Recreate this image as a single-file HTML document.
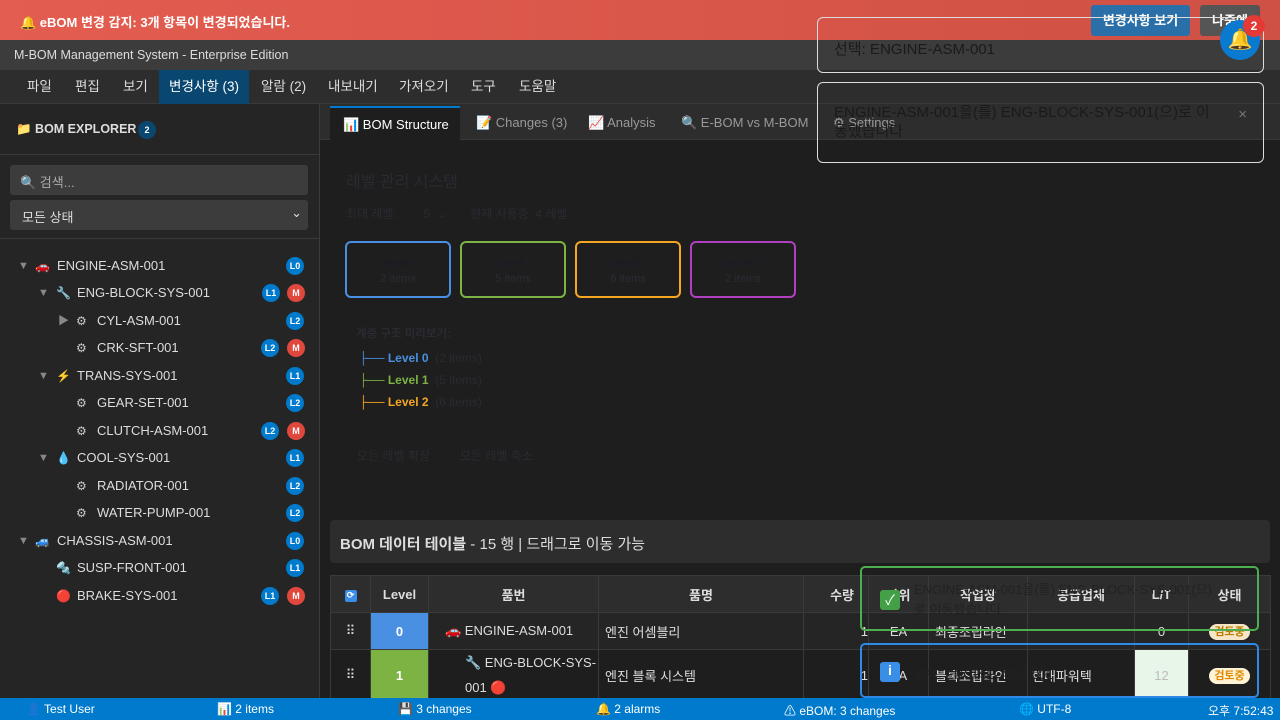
<!DOCTYPE html>
<html><head><meta charset="utf-8"><style>
*{box-sizing:border-box;margin:0;padding:0}
body{width:1280px;height:720px;overflow:hidden;background:#1e1e1e;font-family:"Liberation Sans","Noto Sans CJK KR",sans-serif;color:#ccc;position:relative;font-size:13px}
.abs{position:absolute}
.banner{left:0;top:0;width:1280px;height:40px;background:linear-gradient(90deg,#e35d50,#cf5044);color:#fff;font-weight:bold;font-size:13px;padding:12px 0 0 20px}
.btn{top:5px;height:31px;border-radius:3px;color:#fff;font-weight:bold;font-size:13px;text-align:center;line-height:31px}
.title{left:0;top:40px;width:1280px;height:30px;background:#3c3c3c;color:#ddd;font-size:12.5px;padding:8px 0 0 14px}
.menu{left:0;top:70px;width:1280px;height:34px;background:#2d2d2d;border-bottom:1px solid #3a3a3a}
.menu span{position:absolute;top:0;height:34px;line-height:34px;font-size:13.5px;color:#ddd}
.side{left:0;top:104px;width:320px;height:594px;background:#252526;border-right:1px solid #3a3a3a}
.badge{display:inline-block;width:18px;height:18px;border-radius:9px;background:#007acc;color:#fff;font-size:9px;font-weight:bold;text-align:center;line-height:18px;position:absolute}
.t{position:absolute;font-size:13px;color:#ddd;white-space:nowrap;line-height:16px}
.ar{position:absolute;font-size:11px;color:#888;line-height:16px}
.ic{position:absolute;font-size:12px;line-height:16px}
.tabs{left:320px;top:104px;width:960px;height:36px;background:#2d2d2d;border-bottom:1px solid #3a3a3a}
.tab{position:absolute;top:2px;height:34px;line-height:34px;font-size:13px;color:#999}
.dk{color:#2a2a32}
.lvl{position:absolute;top:241px;width:106px;height:57px;border:2px solid;border-radius:6px;text-align:center}
.lvl b{display:block;margin-top:12px;font-size:13px;color:#1c1c24}
.lvl i{font-style:normal;font-size:11px;color:#2c2c34}
table{border-collapse:collapse;position:absolute;left:330px;top:575px;width:940px;table-layout:fixed}
td,th{border:1px solid #3a3a3a;font-size:13px;color:#ddd;height:37px}
th{background:#2d2d2d;font-weight:bold}
.status{left:0;top:698px;width:1280px;height:22px;background:#007acc;color:#fff;font-size:12px}
.status span{position:absolute;top:4px;white-space:nowrap}
.toast{border:1.5px solid #ddd;border-radius:6px}
</style></head><body>
<div class="abs banner">🔔 eBOM 변경 감지: 3개 항목이 변경되었습니다.</div>
<div class="abs btn" style="left:1091px;width:99px;background:#2a6fa8">변경사항 보기</div>
<div class="abs btn" style="left:1200px;width:60px;background:#555">나중에</div>
<div class="abs title">M-BOM Management System - Enterprise Edition</div>
<div class="abs menu">
<span style="left:27px">파일</span><span style="left:75px">편집</span><span style="left:123px">보기</span>
<span style="left:159px;width:90px;background:#094771;text-align:center;color:#fff">변경사항 (3)</span>
<span style="left:261px">알람 (2)</span><span style="left:328px">내보내기</span><span style="left:399px">가져오기</span><span style="left:471px">도구</span><span style="left:519px">도움말</span>
</div>
<div class="abs side">
<div class="abs" style="left:16px;top:18px;font-weight:bold;font-size:12.5px;color:#ddd;white-space:nowrap">📁 BOM EXPLORER</div>
<div class="badge" style="left:138px;top:17px;background:#094771">2</div>
<div class="abs" style="left:0;top:50px;width:319px;border-top:1px solid #3a3a3a"></div>
<div class="abs" style="left:10px;top:61px;width:298px;height:30px;background:#3c3c3c;border-radius:3px;padding:7px 0 0 10px;color:#aaa">🔍 검색...</div>
<div class="abs" style="left:10px;top:96px;width:298px;height:30px;background:#3c3c3c;border-radius:3px;padding:7px 0 0 12px;color:#ddd">모든 상태<span style="position:absolute;right:6px;top:5px">⌄</span></div>
<div class="abs" style="left:0;top:134px;width:319px;border-top:1px solid #3a3a3a"></div>
</div>
<!-- tree -->
<span class="ar" style="left:18px;top:258px">▼</span><span class="ic" style="left:35px;top:258px">🚗</span><span class="t" style="left:57px;top:258px">ENGINE-ASM-001</span><div class="badge" style="left:286px;top:257px">L0</div>
<span class="ar" style="left:38px;top:285px">▼</span><span class="ic" style="left:56px;top:285px">🔧</span><span class="t" style="left:77px;top:285px">ENG-BLOCK-SYS-001</span><div class="badge" style="left:262px;top:284px">L1</div><div class="badge" style="left:287px;top:284px;background:#e0483e">M</div>
<span class="ar" style="left:58px;top:313px">▶</span><span class="ic" style="left:76px;top:313px">⚙</span><span class="t" style="left:97px;top:313px">CYL-ASM-001</span><div class="badge" style="left:286px;top:312px">L2</div>
<span class="ic" style="left:76px;top:340px">⚙</span><span class="t" style="left:97px;top:340px">CRK-SFT-001</span><div class="badge" style="left:261px;top:339px">L2</div><div class="badge" style="left:287px;top:339px;background:#e0483e">M</div>
<span class="ar" style="left:38px;top:368px">▼</span><span class="ic" style="left:56px;top:368px">⚡</span><span class="t" style="left:77px;top:368px">TRANS-SYS-001</span><div class="badge" style="left:286px;top:367px">L1</div>
<span class="ic" style="left:76px;top:395px">⚙</span><span class="t" style="left:97px;top:395px">GEAR-SET-001</span><div class="badge" style="left:286px;top:394px">L2</div>
<span class="ic" style="left:76px;top:423px">⚙</span><span class="t" style="left:97px;top:423px">CLUTCH-ASM-001</span><div class="badge" style="left:261px;top:422px">L2</div><div class="badge" style="left:287px;top:422px;background:#e0483e">M</div>
<span class="ar" style="left:38px;top:450px">▼</span><span class="ic" style="left:56px;top:450px">💧</span><span class="t" style="left:77px;top:450px">COOL-SYS-001</span><div class="badge" style="left:286px;top:449px">L1</div>
<span class="ic" style="left:76px;top:478px">⚙</span><span class="t" style="left:97px;top:478px">RADIATOR-001</span><div class="badge" style="left:286px;top:477px">L2</div>
<span class="ic" style="left:76px;top:505px">⚙</span><span class="t" style="left:97px;top:505px">WATER-PUMP-001</span><div class="badge" style="left:286px;top:504px">L2</div>
<span class="ar" style="left:18px;top:533px">▼</span><span class="ic" style="left:35px;top:533px">🚙</span><span class="t" style="left:57px;top:533px">CHASSIS-ASM-001</span><div class="badge" style="left:286px;top:532px">L0</div>
<span class="ic" style="left:56px;top:560px">🔩</span><span class="t" style="left:77px;top:560px">SUSP-FRONT-001</span><div class="badge" style="left:286px;top:559px">L1</div>
<span class="ic" style="left:56px;top:588px">🔴</span><span class="t" style="left:77px;top:588px">BRAKE-SYS-001</span><div class="badge" style="left:261px;top:587px">L1</div><div class="badge" style="left:287px;top:587px;background:#e0483e">M</div>
<!-- tabs -->
<div class="abs tabs">
<div class="tab" style="left:10px;width:130px;background:#1e1e1e;border-top:2px solid #007acc;color:#fff;padding-left:13px">📊 BOM Structure</div>
<div class="tab" style="left:156px">📝 Changes (3)</div>
<div class="tab" style="left:268px">📈 Analysis</div>
<div class="tab" style="left:361px">🔍 E-BOM vs M-BOM</div>
<div class="tab" style="left:513px">⚙ Settings</div>
</div>
<div class="abs dk" style="left:346px;top:168px;font-size:16px">레벨 관리 시스템</div>
<div class="abs dk" style="left:346px;top:205px;font-size:12px;white-space:nowrap">최대 레벨: &nbsp;&nbsp;&nbsp;&nbsp;&nbsp;&nbsp;&nbsp;5 &nbsp;⌄ &nbsp;&nbsp;&nbsp;&nbsp;&nbsp;&nbsp;현재 사용중: 4 레벨</div>
<div class="lvl" style="left:345px;border-color:#4a90e2"><b>Level 0</b><i>2 items</i></div>
<div class="lvl" style="left:460px;border-color:#7cb342"><b>Level 1</b><i>5 items</i></div>
<div class="lvl" style="left:575px;border-color:#f5a623"><b>Level 2</b><i>6 items</i></div>
<div class="lvl" style="left:690px;border-color:#b040c0"><b>Level 3</b><i>2 items</i></div>
<div class="abs dk" style="left:356px;top:325px;font-size:11.5px;font-weight:bold">계층 구조 미리보기:</div>
<div class="abs" style="left:359px;top:351px;font-size:12px;font-weight:bold;color:#4a90e2">├── Level 0 <span class="dk" style="font-weight:normal">&nbsp;(2 items)</span></div>
<div class="abs" style="left:359px;top:373px;font-size:12px;font-weight:bold;color:#7cb342">├── Level 1 <span class="dk" style="font-weight:normal">&nbsp;(5 items)</span></div>
<div class="abs" style="left:359px;top:395px;font-size:12px;font-weight:bold;color:#f5a623">├── Level 2 <span class="dk" style="font-weight:normal">&nbsp;(6 items)</span></div>
<div class="abs dk" style="left:357px;top:447px;font-size:12px;white-space:nowrap">모든 레벨 확장 &nbsp;&nbsp;&nbsp;&nbsp;&nbsp;&nbsp;&nbsp;&nbsp;모든 레벨 축소</div>
<div class="abs" style="left:330px;top:520px;width:940px;height:43px;background:#2d2d2d;border-radius:4px;padding:13px 0 0 10px;font-size:15px;color:#ddd"><b>BOM 데이터 테이블</b> - 15 행 | 드래그로 이동 가능</div>
<table>
<colgroup><col style="width:40px"><col style="width:58px"><col style="width:170px"><col style="width:205px"><col style="width:65px"><col style="width:60px"><col style="width:99px"><col style="width:107px"><col style="width:54px"><col style="width:82px"></colgroup>
<tr><th><span style="display:inline-block;width:12px;height:12px;background:#3a8ee6;border-radius:2px;font-size:9px;color:#fff">⟳</span></th><th>Level</th><th>품번</th><th>품명</th><th style="text-align:right;padding-right:14px">수량</th><th>단위</th><th>작업장</th><th>공급업체</th><th>L/T</th><th>상태</th></tr>
<tr style="background:#252526;height:35px"><td style="text-align:center">⠿</td><td style="background:#4a90e2;text-align:center;color:#fff;font-weight:bold">0</td><td style="padding-left:16px">🚗 ENGINE-ASM-001</td><td style="padding-left:6px">엔진 어셈블리</td><td style="text-align:right">1</td><td style="text-align:center">EA</td><td style="padding-left:6px">최종조립라인</td><td></td><td style="text-align:center">0</td><td style="text-align:center"><span style="background:#f5e6c8;color:#c07a00;border-radius:9px;padding:2px 5px;font-size:11px;font-weight:bold">검토중</span></td></tr>
<tr style="height:51px;background:#1e1e1e"><td style="text-align:center">⠿</td><td style="background:#7cb342;text-align:center;color:#fff;font-weight:bold">1</td><td style="padding-left:36px;line-height:25px">🔧 ENG-BLOCK-SYS-001 🔴</td><td style="padding-left:6px">엔진 블록 시스템</td><td style="text-align:right">1</td><td style="text-align:center">EA</td><td style="padding-left:6px">블록조립라인</td><td style="padding-left:4px">현대파워텍</td><td style="background:#e8f5e9;text-align:center;color:#bbb">12</td><td style="text-align:center"><span style="background:#fff3d6;color:#e08a00;border-radius:9px;padding:2px 5px;font-size:11px;font-weight:bold">검토중</span></td></tr>
</table>
<!-- overlay toasts -->
<div class="abs toast" style="left:817px;top:17px;width:447px;height:56px;padding:20px 0 0 16px;font-size:15px;color:#1a1a1a">선택: ENGINE-ASM-001</div>
<div class="abs toast" style="left:817px;top:82px;width:447px;height:81px;padding:20px 40px 0 16px;font-size:15px;color:#1a1a1a;line-height:19px">ENGINE-ASM-001을(를) ENG-BLOCK-SYS-001(으)로 이동했습니다<span style="position:absolute;right:16px;top:22px;color:#777">×</span></div>
<div class="abs" style="left:1220px;top:20px;width:40px;height:40px;border-radius:20px;background:#0a7ad0;text-align:center;line-height:40px;font-size:20px">🔔</div>
<div class="abs" style="left:1243px;top:15px;width:22px;height:22px;border-radius:11px;background:#e53935;color:#fff;font-weight:bold;font-size:12px;text-align:center;line-height:22px">2</div>
<div class="abs" style="left:860px;top:566px;width:399px;height:65px;border:2px solid #4caf50;border-radius:5px"></div>
<div class="abs" style="left:880px;top:590px;width:20px;height:20px;background:#43a047;color:#fff;text-align:center;border-radius:3px;font-size:14px">✓</div>
<div class="abs" style="left:914px;top:580px;font-size:13px;color:#222;line-height:20px;width:300px">ENGINE-ASM-001을(를) ENG-BLOCK-SYS-001(으)로 이동했습니다</div>
<div class="abs" style="left:860px;top:643px;width:399px;height:55px;border:2px solid #2e8ae6;border-radius:5px"></div>
<div class="abs" style="left:880px;top:662px;width:20px;height:20px;background:#3a8ee6;color:#fff;text-align:center;border-radius:3px;font-size:14px;font-weight:bold">i</div>
<div class="abs" style="left:914px;top:664px;font-size:13px;color:#222">선택: ENGINE-ASM-001</div>
<div class="abs status">
<span style="left:26px">👤 Test User</span><span style="left:217px">📊 2 items</span><span style="left:398px">💾 3 changes</span><span style="left:596px">🔔 2 alarms</span><span style="left:784px">⚠ eBOM: 3 changes</span><span style="left:1019px">🌐 UTF-8</span><span style="left:1208px">오후 7:52:43</span>
</div>
</body></html>
